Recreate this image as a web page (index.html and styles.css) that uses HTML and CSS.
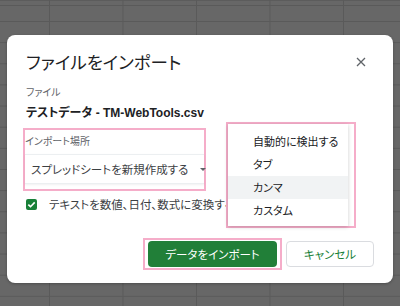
FILE: index.html
```html
<!DOCTYPE html>
<html lang="ja">
<head>
<meta charset="utf-8">
<title>ファイルをインポート</title>
<link rel="stylesheet" href="styles.css">
</head>
<body>
<div class="dialog">
  <div class="head">
    <h1 class="title">ファイルをインポート</h1>
    <svg class="close" width="10" height="10" viewBox="0 0 10 10"><path d="M1 1L9 9M9 1L1 9" stroke="#5f6368" stroke-width="1.3" fill="none"/></svg>
  </div>
  <div class="label">ファイル</div>
  <div class="filename">テストデータ - TM-WebTools.csv</div>
  <div class="loc hl">
    <div class="loc-label">インポート場所</div>
    <div class="select">
      <span class="select-text">スプレッドシートを新規作成する</span>
      <span class="caret"></span>
    </div>
  </div>
  <div class="check-row">
    <span class="checkbox"><svg width="11" height="11" viewBox="0 0 11 11"><path d="M2.3 5.6L4.5 7.7L8.7 3.4" stroke="#fff" stroke-width="1.6" fill="none"/></svg></span>
    <span class="check-text">テキストを数値、日付、数式に変換する</span>
  </div>
  <div class="actions">
    <div class="hl btn-wrap"><button class="btn primary">データをインポート</button></div>
    <button class="btn secondary">キャンセル</button>
  </div>
  <div class="menu-hl">
    <ul class="menu">
      <li class="item">自動的に検出する</li>
      <li class="item">タブ</li>
      <li class="item active">カンマ</li>
      <li class="item">カスタム</li>
    </ul>
  </div>
</div>
</body>
</html>
```
FILE: styles.css
```css
html, body {
  margin: 0;
  padding: 0;
}
body {
  width: 400px;
  height: 306px;
  overflow: hidden;
  background-color: #676767;
  background-image:
    linear-gradient(to right, #5a5a5a 1px, transparent 1px),
    linear-gradient(to bottom, #5a5a5a 1px, transparent 1px),
    linear-gradient(to bottom, transparent 5px, #5a5a5a 5px, #5a5a5a 6px, transparent 6px);
  background-size: 73.5px 100%, 100% 21.15px, 100% 100%;
  background-position: 49px 0, 0 21px, 0 0;
  background-repeat: repeat-x, repeat-y, no-repeat;
  font-family: "Noto Sans CJK JP", "Liberation Sans", sans-serif;
  font-feature-settings: "palt";
  color: #202124;
  padding-top: 35px;
  box-sizing: border-box;
}
.dialog {
  position: relative;
  margin: 0 7px;
  height: 248px;
  box-sizing: border-box;
  background: #fff;
  border-radius: 8px;
  padding: 16px 19px 0 19px;
  display: flex;
  flex-direction: column;
  align-items: flex-start;
  box-shadow: 0 1px 3px rgba(0,0,0,0.25);
}
.head {
  align-self: stretch;
  display: flex;
  align-items: center;
  justify-content: space-between;
}
.title {
  margin: 0;
  font-size: 17.5px;
  font-weight: 400;
  line-height: 22px;
  color: #202124;
}
.close {
  margin-right: 8px;
}
.label {
  margin-top: 12px;
  font-size: 10px;
  line-height: 14px;
  color: #5f6368;
}
.filename {
  margin-top: 6px;
  font-family: "Liberation Sans", "Noto Sans CJK JP", sans-serif;
  font-size: 12px;
  font-weight: 700;
  line-height: 16px;
  color: #202124;
}
.hl {
  border: 2px solid #f5adc9;
}
.loc {
  margin-top: 7px;
  margin-left: -3px;
  width: 179px;
  padding: 4px 0 5px 0;
}
.loc-label {
  font-size: 10px;
  line-height: 14px;
  color: #5f6368;
}
.select {
  margin-top: 6px;
  height: 30px;
  box-sizing: border-box;
  display: flex;
  align-items: center;
  padding-left: 6px;
  border-top: 1px solid #eceff1;
  border-bottom: 1px solid #eceff1;
  box-shadow: 0 1px 2px rgba(0,0,0,0.06);
}
.select-text {
  font-size: 11.5px;
  color: #3c4043;
  white-space: nowrap;
}
.caret {
  margin-left: 12px;
  width: 0;
  height: 0;
  border-left: 3px solid transparent;
  border-right: 3px solid transparent;
  border-top: 3px solid #5f6368;
}
.check-row {
  margin-top: 5px;
  display: flex;
  align-items: center;
  height: 16px;
}
.checkbox {
  width: 11px;
  height: 11px;
  border-radius: 2px;
  background: #188038;
  display: flex;
}
.check-text {
  margin-left: 12px;
  font-size: 11.5px;
  color: #3c4043;
  white-space: nowrap;
}
.actions {
  align-self: flex-end;
  margin-top: 26px;
  display: flex;
  align-items: center;
  gap: 4px;
}
.btn-wrap {
  padding: 1px 3px;
  display: flex;
}
.btn {
  font-family: "Noto Sans CJK JP", "Liberation Sans", sans-serif;
  font-feature-settings: "palt";
  font-size: 11.5px;
  border-radius: 4px;
  padding: 0;
  cursor: pointer;
}
.primary {
  width: 129px;
  height: 26px;
  background: #217f38;
  color: #fff;
  border: none;
}
.secondary {
  width: 88px;
  height: 26px;
  background: #fff;
  color: #188038;
  border: 1px solid #dadce0;
}
.menu-hl {
  position: absolute;
  left: 219px;
  top: 87px;
  width: 123px;
  height: 102px;
  border: 2px solid #f5adc9;
  padding-right: 3px;
  box-sizing: content-box;
}
.menu {
  list-style: none;
  margin: 0;
  padding: 6px 0 4px 0;
  width: 120px;
  height: 102px;
  box-sizing: border-box;
  background: #fff;
  box-shadow: 0 1px 4px rgba(0,0,0,0.2);
}
.item {
  height: 23px;
  line-height: 23px;
  padding-left: 25px;
  font-size: 11px;
  color: #202124;
}
.item.active {
  background: #f1f3f4;
}
```
